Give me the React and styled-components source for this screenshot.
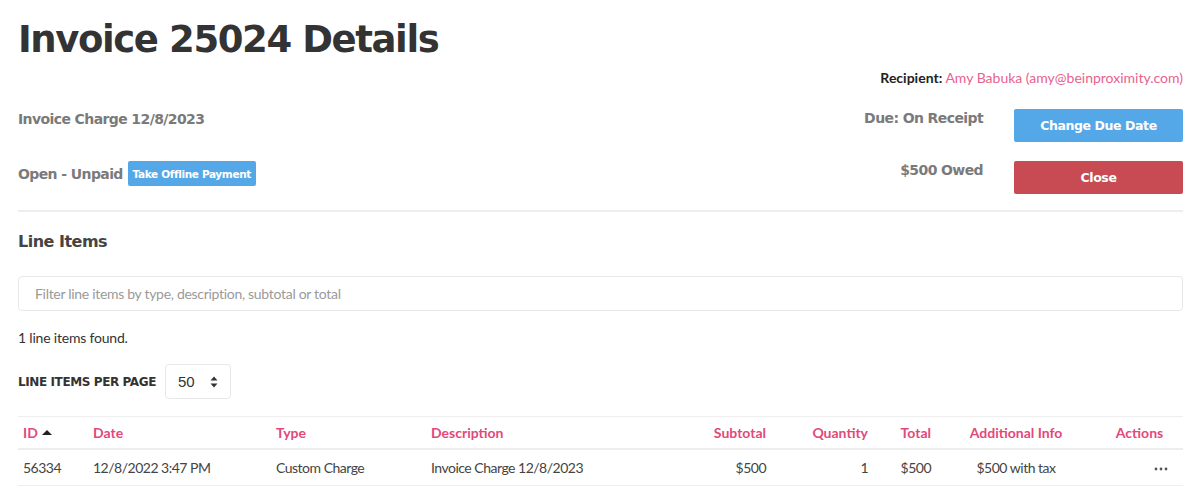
import React from "react";
import styled, { createGlobalStyle } from "styled-components";

const Global = createGlobalStyle`
  html, body { margin: 0; padding: 0; background: #fff; }
  body { font-family: "Lato", "Noto Sans", sans-serif; color: #333; }
  * { box-sizing: border-box; }
`;

const HEAD = `"DejaVu Sans", "Noto Sans", sans-serif`;
const BODY = `"Lato", "Noto Sans", sans-serif`;
const PINK = "#e2497b";

const Page = styled.div`
  padding: 0 17px 0 18px;
  width: 1200px;
`;

const Title = styled.h1`
  margin: 0;
  padding-top: 18px;
  font-family: ${HEAD};
  font-weight: 800;
  font-size: 37px;
  line-height: 44px;
  color: #333;
  letter-spacing: -1.4px;
`;

const RecipientLine = styled.div`
  margin-top: 7px;
  text-align: right;
  font-family: ${BODY};
  font-size: 14px;
  line-height: 18px;
  color: #222;
  b { font-weight: 700; }
  span { color: #e8628f; }
`;

const InfoRow = styled.div`
  display: flex;
  justify-content: space-between;
  align-items: flex-start;
  margin-top: ${(p) => p.$top}px;
`;

const InfoText = styled.div`
  font-family: ${HEAD};
  font-weight: 700;
  font-size: 14px;
  line-height: 18px;
  letter-spacing: -0.6px;
  color: #7a7a7a;
  padding-top: ${(p) => p.$pt || 0}px;
`;

const LeftGroup = styled.div`
  display: flex;
  align-items: center;
  gap: 5px;
`;

const RightGroup = styled.div`
  display: flex;
  align-items: flex-start;
  gap: 31px;
`;

const Button = styled.button`
  font-family: ${HEAD};
  font-weight: 700;
  border: none;
  border-radius: 2px;
  color: #fff;
  cursor: pointer;
  background: ${(p) => (p.$variant === "danger" ? "#c84a52" : "#54a8e8")};
  width: ${(p) => (p.$small ? "128px" : "169px")};
  height: ${(p) => (p.$small ? "25px" : "33px")};
  padding: 0;
  font-size: ${(p) => (p.$small ? "10.5px" : "12.5px")};
  letter-spacing: ${(p) => (p.$small ? "-0.35px" : "-0.4px")};
`;

const Divider = styled.hr`
  border: none;
  border-top: 2px solid #eeeeee;
  margin: 16px 0 0;
`;

const SectionTitle = styled.h2`
  margin: 20px 0 0;
  font-family: ${HEAD};
  font-weight: 700;
  font-size: 16px;
  line-height: 20px;
  letter-spacing: -0.5px;
  color: #444;
`;

const Filter = styled.input`
  display: block;
  width: 100%;
  margin-top: 24px;
  height: 35px;
  border: 1px solid #e8e8e8;
  border-radius: 4px;
  padding: 0 16px;
  font-family: ${BODY};
  font-size: 14px;
  letter-spacing: -0.3px;
  color: #333;
  &::placeholder { color: #9a9a9a; }
  outline: none;
`;

const Count = styled.div`
  margin-top: 18px;
  font-family: ${BODY};
  font-size: 14px;
  line-height: 18px;
  letter-spacing: -0.2px;
  color: #333;
`;

const PerPage = styled.div`
  display: flex;
  align-items: center;
  gap: 9px;
  margin-top: 17px;
`;

const PerPageLabel = styled.span`
  font-family: ${HEAD};
  font-weight: 700;
  font-size: 12px;
  letter-spacing: -0.4px;
  color: #333;
  text-transform: uppercase;
`;

const SelectBox = styled.div`
  display: flex;
  align-items: center;
  justify-content: space-between;
  width: 66px;
  height: 35px;
  border: 1px solid #e8e8e8;
  border-radius: 4px;
  padding: 0 12px 0 12px;
  font-family: "Liberation Sans", Arial, sans-serif;
  font-size: 15px;
  color: #333;
`;

const Table = styled.table`
  width: 100%;
  margin-top: 17px;
  border-collapse: collapse;
  table-layout: fixed;
  font-family: ${BODY};
  font-size: 14px;
`;

const Th = styled.th`
  color: ${PINK};
  font-weight: 700;
  text-align: ${(p) => p.$align || "left"};
  padding: 0 5px;
  height: 32px;
  border-top: 1px solid #eeeeee;
  border-bottom: 2px solid #eeeeee;
  white-space: nowrap;
`;

const Td = styled.td`
  color: #444;
  text-align: ${(p) => p.$align || "left"};
  padding: 0 5px;
  padding-right: ${(p) => (p.$pr ? `${p.$pr}px` : "5px")};
  height: 37px;
  letter-spacing: -0.5px;
  border-bottom: 1px solid #eeeeee;
  white-space: nowrap;
`;

const SortCaret = styled.span`
  display: inline-block;
  margin-left: 4px;
  width: 0;
  height: 0;
  border-left: 5px solid transparent;
  border-right: 5px solid transparent;
  border-bottom: 5px solid #222;
  vertical-align: 3px;
`;

const Dots = styled.svg`
  display: inline-block;
  vertical-align: middle;
`;

const cols = [
  { w: 70, a: "left" },
  { w: 183, a: "left" },
  { w: 155, a: "left" },
  { w: 239, a: "left" },
  { w: 106, a: "right" },
  { w: 102, a: "right" },
  { w: 63, a: "right" },
  { w: 160, a: "center" },
  { w: 87, a: "center" },
];

export default function App() {
  const headers = ["ID", "Date", "Type", "Description", "Subtotal", "Quantity", "Total", "Additional Info", "Actions"];
  const row = ["56334", "12/8/2022 3:47 PM", "Custom Charge", "Invoice Charge 12/8/2023", "$500", "1", "$500", "$500 with tax"];
  return (
    <>
      <Global />
      <Page>
        <Title>Invoice 25024 Details</Title>
        <RecipientLine>
          <b>Recipient:</b> <span>Amy Babuka (amy@beinproximity.com)</span>
        </RecipientLine>
        <InfoRow $top={22}>
          <InfoText $pt={1}>Invoice Charge 12/8/2023</InfoText>
          <RightGroup>
            <InfoText $pt={0}>Due: On Receipt</InfoText>
            <Button>Change Due Date</Button>
          </RightGroup>
        </InfoRow>
        <InfoRow $top={19}>
          <LeftGroup>
            <InfoText>Open - Unpaid</InfoText>
            <Button $small>Take Offline Payment</Button>
          </LeftGroup>
          <RightGroup>
            <InfoText $pt={0}>$500 Owed</InfoText>
            <Button $variant="danger">Close</Button>
          </RightGroup>
        </InfoRow>
        <Divider />
        <SectionTitle>Line Items</SectionTitle>
        <Filter placeholder="Filter line items by type, description, subtotal or total" />
        <Count>1 line items found.</Count>
        <PerPage>
          <PerPageLabel>Line Items Per Page</PerPageLabel>
          <SelectBox>
            <span>50</span>
            <svg width="8" height="12" viewBox="0 0 8 12">
              <path d="M4 0.5 L7.5 4.5 H0.5 Z" fill="#333" />
              <path d="M4 11.5 L7.5 7.5 H0.5 Z" fill="#333" />
            </svg>
          </SelectBox>
        </PerPage>
        <Table>
          <colgroup>
            {cols.map((c, i) => (
              <col key={i} style={{ width: c.w }} />
            ))}
          </colgroup>
          <thead>
            <tr>
              {headers.map((h, i) => (
                <Th key={h} $align={cols[i].a}>
                  {h}
                  {i === 0 && <SortCaret />}
                </Th>
              ))}
            </tr>
          </thead>
          <tbody>
            <tr>
              {row.map((v, i) => (
                <Td key={i} $align={cols[i].a}>{v}</Td>
              ))}
              <Td $align="right" $pr={15}>
                <Dots width="14" height="4" viewBox="0 0 14 4">
                  <circle cx="2" cy="2" r="1.4" fill="#555" />
                  <circle cx="7" cy="2" r="1.4" fill="#555" />
                  <circle cx="12" cy="2" r="1.4" fill="#555" />
                </Dots>
              </Td>
            </tr>
          </tbody>
        </Table>
      </Page>
    </>
  );
}
